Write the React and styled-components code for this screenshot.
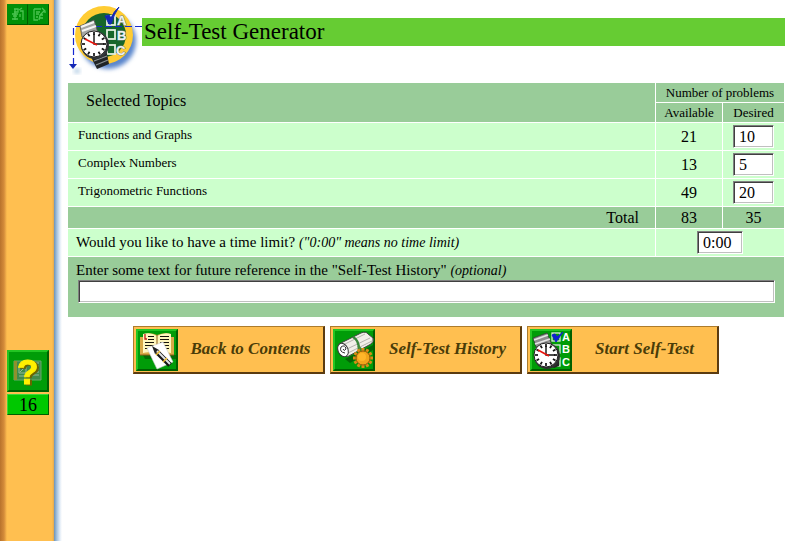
import React, { useState } from "react";
import styled, { createGlobalStyle } from "styled-components";

const topicList = [
  { id: "functions", name: "Functions and Graphs", available: 21 },
  { id: "complex", name: "Complex Numbers", available: 13 },
  { id: "trig", name: "Trigonometric Functions", available: 49 },
];

const ticks = [0, 30, 60, 90, 120, 150, 180, 210, 240, 270, 300, 330];

function WatchFace({ cx, cy, r }) {
  return (
    <g>
      <circle cx={cx} cy={cy} r={r} fill="#fff" stroke="#222" strokeWidth="1" />
      {ticks.map((angle) => (
        <line
          key={angle}
          x1={cx}
          y1={cy - r + 1}
          x2={cx}
          y2={cy - r + 4}
          stroke="#111"
          strokeWidth="1.7"
          transform={`rotate(${angle} ${cx} ${cy})`}
        />
      ))}
      <path
        d={`M${cx} ${cy - r + 3}V${cy}H${cx + r - 3}`}
        fill="none"
        stroke="#111"
        strokeWidth="1.4"
      />
      <path
        d={`M${cx - r + 4} ${cy - 5}L${cx + 3} ${cy + 1}`}
        stroke="#e8140c"
        strokeWidth="1.6"
      />
    </g>
  );
}

function LogoIcon() {
  return (
    <Logo viewBox="0 0 74 72" aria-hidden="true">
      <defs>
        <filter id="soft" x="-30%" y="-30%" width="160%" height="160%">
          <feGaussianBlur stdDeviation="2" />
        </filter>
      </defs>
      <circle cx="40" cy="37" r="28" fill="#5a86cc" filter="url(#soft)" />
      <circle cx="36" cy="31" r="29" fill="#fc3" />
      <circle cx="36" cy="31" r="22" fill="#17662b" />
      <g fill="none" stroke="#e4efe0" strokeWidth="1.8">
        <rect x="39" y="12" width="8" height="9" />
        <rect x="39" y="26" width="8" height="9" />
        <rect x="39" y="41" width="8" height="9" />
      </g>
      <g
        fill="#eef2f2"
        stroke="#7d8a8a"
        strokeWidth="1"
        paintOrder="stroke"
        fontFamily="Liberation Sans, Arial, sans-serif"
        fontSize="13"
        fontWeight="bold"
      >
        <text x="49" y="21">A</text>
        <text x="49" y="36">B</text>
        <text x="48" y="51">C</text>
      </g>
      <path d="M37 12L41 11L43 14Q46 7 51 3Q46 10 43 20H41Z" fill="#1428b4" stroke="#1428b4" />
      <path
        d="M74 22.500H5.500V60"
        fill="none"
        stroke="#1428d2"
        strokeWidth="1.200"
        strokeDasharray="7 3"
      />
      <path d="M1 60H9L5 65Z" fill="#1428b4" />
      <ellipse cx="9" cy="67" rx="3" ry="2" fill="#9fc0dd" filter="url(#soft)" />
      <path d="M12 22L26 16L30 29L14 33Z" fill="#a4a6a4" stroke="#555" strokeWidth="0.800" />
      <path d="M13 23L26 18M14 27L28 22" stroke="#f4f4f4" strokeWidth="2" />
      <path d="M23 53L38 45L41 60L29 65Z" fill="#202426" />
      <path d="M26 57L39 52M28 61L40 56" stroke="#8a9295" strokeWidth="1.200" />
      <circle cx="27" cy="41" r="14" fill="#30363a" />
      <WatchFace cx={26} cy={40} r={13} />
    </Logo>
  );
}

function BookIcon() {
  return (
    <IconTile viewBox="0 0 42 42" aria-hidden="true">
      <TileBase />
      <path d="M7 26L40 26V30H9Z" fill="#064c06" opacity="0.600" />
      <path d="M4 8H8V5Q15 3 21 6Q28 3 35 5V8H38V26H22L20 28L18 26H4Z" fill="#d8a948" />
      <path d="M7 5Q15 3 21 7V25Q14 22 7 24Z" fill="#fff6bd" />
      <path d="M21 7Q28 3 35 5V24Q28 22 21 25Z" fill="#fff6bd" />
      <path d="M21 6V25M4 26H18L21 28L23 26H38" fill="none" stroke="#8c5c18" />
      <path
        d="M12 7.500H18M12 10.500H18M9 13.500H18M9 16.500H18M9 19.500H18M24 7.500H33M24 10.500H33M24 13.500H33M24 16.500H33M24 19.500H33"
        stroke="#17140c"
        strokeWidth="1.200"
      />
      <path d="M9 5V10H11" fill="none" stroke="#c31818" strokeWidth="1.300" />
      <path d="M11 19L27 13L37 33L21 40Z" fill="#fff" stroke="#ccc" strokeWidth="0.600" />
      <path d="M21 23L34 36" stroke="#151515" strokeWidth="5" />
      <path d="M16 17L23 21L19 25Z" fill="#222" />
      <path d="M21 22L34 35" stroke="#e2e4e5" strokeWidth="2" />
      <path d="M20 26L24 22M27 33L31 29" stroke="#e8b82d" strokeWidth="1.500" />
    </IconTile>
  );
}

function ScrollIcon() {
  return (
    <IconTile viewBox="0 0 42 42" aria-hidden="true">
      <TileBase />
      <path d="M12 30L40 16V21L17 34Z" fill="#055005" opacity="0.700" />
      <path d="M6 15L28 4Q33 2 35 5L40 9Q41 13 38 15L14 28Z" fill="#f1efe8" stroke="#444" />
      <path d="M10 16L32 5M14 20L37 9M15 24L39 12" stroke="#b5b3ae" strokeWidth="1" />
      <ellipse cx="10" cy="21" rx="5" ry="7" transform="rotate(-25 10 21)" fill="#fff" stroke="#333" />
      <path d="M12 24Q6 23 8 18Q12 15 13 20Q11 23 10 20" fill="none" stroke="#333" />
      <path d="M20 8Q26 11 26 21" fill="none" stroke="#378638" strokeWidth="2.500" />
      <path d="M25 17L30 22" stroke="#438c38" strokeWidth="2" />
      <g stroke="#d98d16" strokeWidth="3">
        {ticks.map((angle) => (
          <path key={angle} d="M30 19V22" transform={`rotate(${angle} 30 29)`} />
        ))}
      </g>
      <circle cx="30" cy="29" r="7" fill="#f0a51b" stroke="#9e5a0a" />
      <circle cx="29" cy="28" r="4" fill="#ffb629" />
    </IconTile>
  );
}

function WatchIcon() {
  return (
    <IconTile viewBox="0 0 42 42" aria-hidden="true">
      <TileBase />
      <g fill="none" stroke="#dce8dc" strokeWidth="1.300">
        <rect x="22" y="4" width="8" height="8" />
        <rect x="22" y="16" width="8" height="8" />
        <rect x="22" y="29" width="8" height="8" />
      </g>
      <g
        fill="#fff"
        fontFamily="Liberation Sans, Arial, sans-serif"
        fontSize="11"
        fontStyle="normal"
        fontWeight="bold"
      >
        <text x="32" y="12">A</text>
        <text x="32" y="24">B</text>
        <text x="32" y="37">C</text>
      </g>
      <path d="M22 6L25 5L27 8L33 3L26 13Z" fill="#1020d0" stroke="#1020d0" />
      <path d="M3 9L17 4L22 16L6 18Z" fill="#8d8d8d" stroke="#333" strokeWidth="0.700" />
      <path d="M4 11L18 6M5 15L20 10" stroke="#e4e4e4" strokeWidth="1.600" />
      <path d="M19 36L29 29V37L24 39Z" fill="#242424" />
      <circle cx="17" cy="27" r="13" fill="#303030" />
      <WatchFace cx={16} cy={26} r={12} />
    </IconTile>
  );
}

function HelpIcon() {
  return (
    <IconTile viewBox="0 0 42 42" aria-hidden="true">
      <TileBase />
      <path d="M7 11H34V30H7Z" fill="#3f8a4c" stroke="#69a86c" />
      <path d="M7 11H10V30H7Z" fill="#90912d" />
      <path
        d="M12 16H19V23H12ZM13 22L18 17M25 13H32M25 16H32M25 19H32M25 22H32M25 25H32M12 26H18"
        fill="none"
        stroke="#96b89a"
      />
      <QuestionMark x="10" y="34">?</QuestionMark>
    </IconTile>
  );
}

function TileBase() {
  return (
    <g>
      <rect width="42" height="42" fill="#009c08" />
      <path d="M0 42V0H42L40 2H2V40Z" fill="#23c523" />
      <path d="M0 42H42V0L40 2V40H2Z" fill="#006000" />
    </g>
  );
}

export default function App() {
  const [desired, setDesired] = useState({ functions: "10", complex: "5", trig: "20" });
  const [limit, setLimit] = useState("0:00");
  const [note, setNote] = useState("");

  const totalAvailable = topicList.reduce((sum, topic) => sum + topic.available, 0);
  const totalDesired = topicList.reduce(
    (sum, topic) => sum + (parseInt(desired[topic.id]) || 0),
    0
  );

  const changeDesired = (id, value) => {
    setDesired({ ...desired, [id]: value });
  };

  return (
    <Page>
      <GlobalStyle />
      <Sidebar>
        <SmallButtons>
          <SmallButton type="button" aria-label="Previous topic">
            <svg width="19" height="19" viewBox="0 0 19 19">
              <path
                d="M6 4H10V7H6M4 9H10M5 11H9M4 14H10M7 4V15M11 5L14 3M12 6H15V15M12 9V12"
                fill="none"
                stroke="#4cc452"
                strokeWidth="1.300"
              />
            </svg>
          </SmallButton>
          <SmallButton type="button" aria-label="Next topic">
            <svg width="19" height="19" viewBox="0 0 19 19">
              <path
                d="M5 4H12M5 4V15H9M7 7H11M7 9H10M7 12H9M10 15L11 10L15 6M11 10H14M11 13H14M13 3L16 6V8"
                fill="none"
                stroke="#4cc452"
                strokeWidth="1.300"
              />
            </svg>
          </SmallButton>
        </SmallButtons>
        <HelpBlock>
          <HelpButton type="button" aria-label="Help">
            <HelpIcon />
          </HelpButton>
          <PageNumber>16</PageNumber>
        </HelpBlock>
      </Sidebar>
      <Main>
        <Header>
          <LogoIcon />
          <Title>Self-Test Generator</Title>
        </Header>
        <form onSubmit={(e) => e.preventDefault()}>
          <Table>
            <colgroup>
              <col />
              <NumberCol $width={66} />
              <NumberCol $width={61} />
            </colgroup>
            <thead>
              <tr>
                <TopicHead rowSpan={2}>Selected Topics</TopicHead>
                <SmallHead colSpan={2}>Number of problems</SmallHead>
              </tr>
              <tr>
                <SmallHead>Available</SmallHead>
                <SmallHead>Desired</SmallHead>
              </tr>
            </thead>
            <tbody>
              {topicList.map((topic) => (
                <tr key={topic.id}>
                  <TopicCell>
                    <label htmlFor={topic.id}>{topic.name}</label>
                  </TopicCell>
                  <NumberCell>{topic.available}</NumberCell>
                  <NumberCell>
                    <Field
                      id={topic.id}
                      type="text"
                      $width="41px"
                      value={desired[topic.id]}
                      onChange={(e) => changeDesired(topic.id, e.target.value)}
                    />
                  </NumberCell>
                </tr>
              ))}
              <tr>
                <TotalLabel>Total</TotalLabel>
                <NumberCell $dark>{totalAvailable}</NumberCell>
                <NumberCell $dark>{totalDesired}</NumberCell>
              </tr>
              <tr>
                <LimitCell>
                  <label htmlFor="limit">
                    Would you like to have a time limit?{" "}
                    <Hint>("0:00" means no time limit)</Hint>
                  </label>
                </LimitCell>
                <NumberCell colSpan={2}>
                  <Field
                    id="limit"
                    type="text"
                    $width="46px"
                    value={limit}
                    onChange={(e) => setLimit(e.target.value)}
                  />
                </NumberCell>
              </tr>
              <tr>
                <NoteCell colSpan={3}>
                  <label htmlFor="note">
                    Enter some text for future reference in the "Self-Test History"{" "}
                    <Hint>(optional)</Hint>
                  </label>
                  <Field
                    id="note"
                    type="text"
                    $width="100%"
                    value={note}
                    onChange={(e) => setNote(e.target.value)}
                  />
                </NoteCell>
              </tr>
            </tbody>
          </Table>
          <Actions>
            <ActionButton type="button">
              <BookIcon />
              <span>Back to Contents</span>
            </ActionButton>
            <ActionButton type="button">
              <ScrollIcon />
              <span>Self-Test History</span>
            </ActionButton>
            <ActionButton type="submit">
              <WatchIcon />
              <span>Start Self-Test</span>
            </ActionButton>
          </Actions>
        </form>
      </Main>
    </Page>
  );
}

const GlobalStyle = createGlobalStyle`
  * {
    box-sizing: border-box;
  }
  body {
    margin: 0;
    background: #fff;
    color: #000;
    font-family: "Liberation Serif", "Times New Roman", serif;
    font-size: 16px;
  }
  button,
  input {
    font-family: inherit;
  }
`;

const Page = styled.div`
  display: flex;
  min-height: 100vh;
`;

const Sidebar = styled.nav`
  flex: 0 0 62px;
  display: flex;
  flex-direction: column;
  justify-content: space-between;
  padding: 4px 13px 126px 7px;
  background: linear-gradient(
    to right,
    #b8732c 0,
    #d48c3a 4px,
    #ffbf50 7px,
    #ffbf50 52px,
    #e0a850 54px,
    #6d93b8 54px,
    #a9c5df 57px,
    #e4edf7 60px,
    #fff 62px
  );
`;

const SmallButtons = styled.div`
  display: flex;
`;

const SmallButton = styled.button`
  width: 21px;
  height: 21px;
  padding: 0;
  border: 1px solid;
  border-color: #078a0a #005c00 #005c00 #078a0a;
  background: #009008;
  svg {
    display: block;
  }
`;

const HelpBlock = styled.div`
  display: flex;
  flex-direction: column;
  gap: 2px;
`;

const HelpButton = styled.button`
  width: 42px;
  padding: 0;
  border: 0;
  background: none;
`;

const QuestionMark = styled.text`
  fill: #fff000;
  stroke: #fff000;
  font-family: "Liberation Sans", Arial, sans-serif;
  font-size: 35px;
  font-weight: bold;
  filter: drop-shadow(2px 1px 0 #6b6400);
`;

const PageNumber = styled.div`
  height: 21px;
  border: 1px solid;
  border-color: #3ad83a #006000 #006000 #3ad83a;
  background: #00c800;
  font-size: 18px;
  line-height: 20px;
  text-align: center;
`;

const Main = styled.main`
  flex: 1;
  min-width: 0;
  padding: 4px 6px 0 5px;
`;

const Header = styled.header`
  display: flex;
  align-items: flex-start;
  padding: 0 0 6px 1px;
`;

const Logo = styled.svg`
  flex: none;
  width: 74px;
  height: 72px;
`;

const Title = styled.h1`
  flex: 1;
  margin: 14px 0 0;
  padding-left: 2px;
  background: #6c3;
  font-size: 23px;
  font-weight: normal;
  line-height: 28px;
`;

const Table = styled.table`
  width: 100%;
  table-layout: fixed;
  border-collapse: separate;
  border-spacing: 1px;
  th,
  td {
    padding: 0;
    font-weight: normal;
  }
`;

const NumberCol = styled.col`
  width: ${(props) => props.$width}px;
`;

const TopicHead = styled.th`
  && {
    padding: 0 18px 3px;
  }
  background: #9c9;
  text-align: left;
`;

const SmallHead = styled.th`
  height: 19px;
  background: #9c9;
  font-size: 13px;
  line-height: 19px;
`;

const TopicCell = styled.td`
  && {
    padding: 4px 10px 0;
  }
  background: #cfc;
  font-size: 13px;
  line-height: 16px;
  vertical-align: top;
`;

const NumberCell = styled.td`
  height: ${(props) => (props.$dark ? "21px" : "27px")};
  background: ${(props) => (props.$dark ? "#9c9" : "#cfc")};
  line-height: 20px;
  text-align: center;
`;

const TotalLabel = styled.td`
  && {
    padding-right: 16px;
  }
  background: #9c9;
  line-height: 20px;
  text-align: right;
`;

const LimitCell = styled.td`
  && {
    padding-left: 8px;
  }
  background: #cfc;
  font-size: 15px;
`;

const NoteCell = styled.td`
  && {
    padding: 3px 9px 14px 10px;
  }
  background: #9c9;
  font-size: 15px;
  label {
    display: block;
    margin-left: -2px;
    line-height: 20px;
  }
`;

const Hint = styled.i`
  font-size: 14px;
  line-height: 16px;
`;

const Field = styled.input`
  display: block;
  width: ${(props) => props.$width};
  height: 23px;
  margin: 0 auto;
  padding: 0 5px;
  border: 1px solid;
  border-color: #808080 #fff #fff #808080;
  border-radius: 0;
  background: #fff;
  box-shadow: inset 1px 1px #404040, inset -1px -1px #c0c0c0;
  font-size: 16px;
  line-height: 20px;
  outline: none;
`;

const Actions = styled.div`
  display: flex;
  justify-content: center;
  gap: 5px;
  padding-top: 8px;
`;

const ActionButton = styled.button`
  display: flex;
  align-items: center;
  width: 192px;
  height: 48px;
  padding: 0 0 0 2px;
  border: 1px solid;
  border-width: 1px 2px 2px 1px;
  border-color: #ad7c2c #5b3b10 #5b3b10 #ad7c2c;
  background: #ffbf50;
  color: #4a3c08;
  font-size: 17px;
  font-style: italic;
  font-weight: bold;
  cursor: pointer;
  span {
    flex: 1;
    padding-bottom: 2px;
    text-align: center;
  }
`;

const IconTile = styled.svg`
  display: block;
  flex: none;
  width: 42px;
  height: 42px;
`;
